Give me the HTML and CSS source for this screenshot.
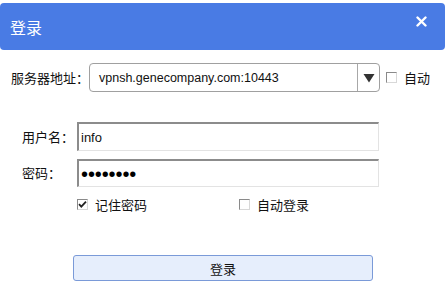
FILE: index.html
```html
<!DOCTYPE html>
<html>
<head>
<meta charset="utf-8">
<link rel="stylesheet" href="styles.css">
</head>
<body>
<div class="window">
  <div class="topstrip"></div>
  <div class="header">
    <span class="title">登录</span>
    <span class="close">
      <svg width="11" height="11" viewBox="0 0 11 11"><path d="M1.5 1.5 L9.5 9.5 M9.5 1.5 L1.5 9.5" stroke="#fff" stroke-width="2.4" stroke-linecap="round"/></svg>
    </span>
  </div>
  <div class="row row-server">
    <span class="label label-server">服务器地址：</span>
    <div class="select">
      <span class="select-text">vpnsh.genecompany.com:10443</span>
      <span class="select-arrow">
        <svg width="12" height="10" viewBox="0 0 12 10"><path d="M0.5 1 L11.5 1 L6 9.5 Z" fill="#333"/></svg>
      </span>
    </div>
    <span class="cb"></span>
    <span class="cb-label">自动</span>
  </div>
  <div class="row row-user">
    <span class="label label-field">用户名：</span>
    <div class="input"><span class="input-text">info</span></div>
  </div>
  <div class="row row-pass">
    <span class="label label-field">密码：</span>
    <div class="input"><span class="input-dots">••••••••</span></div>
  </div>
  <div class="row row-checks">
    <div class="check-item check-first">
      <span class="cb cb-checked">
        <svg width="11" height="11" viewBox="0 0 11 11"><path d="M2 5.2 L4.3 7.6 L9 2.6" fill="none" stroke="#222" stroke-width="1.8"/></svg>
      </span>
      <span class="cb-label">记住密码</span>
    </div>
    <div class="check-item check-second">
      <span class="cb"></span>
      <span class="cb-label">自动登录</span>
    </div>
  </div>
  <div class="row row-btn">
    <button class="btn">登录</button>
  </div>
</div>
</body>
</html>
```
FILE: styles.css
```css
html, body {
  margin: 0;
  padding: 0;
  background: #ffffff;
}
body {
  font-family: "Noto Sans CJK SC", "Liberation Sans", sans-serif;
  color: #111;
}
.window {
  width: 445px;
  height: 291px;
  display: flex;
  flex-direction: column;
  overflow: hidden;
}
.topstrip {
  height: 3px;
  flex: none;
}
.header {
  height: 47px;
  flex: none;
  background: #497be4;
  border-radius: 4px;
  display: flex;
  align-items: center;
  justify-content: space-between;
  padding: 0 18px 0 10px;
  box-sizing: border-box;
}
.title {
  color: #fff;
  font-size: 16px;
  line-height: 20px;
}
.close {
  display: flex;
  align-items: center;
  margin-top: -11px;
}
.row {
  display: flex;
  align-items: center;
  flex: none;
}
.label {
  font-size: 13px;
  color: #111;
  line-height: 16px;
}
.row-server {
  margin-top: 13px;
  height: 29px;
  padding-left: 11px;
}
.label-server {
  width: 78px;
}
.select {
  width: 291px;
  height: 29px;
  box-sizing: border-box;
  border: 1px solid #a0a0a0;
  border-radius: 4px;
  display: flex;
  align-items: center;
}
.select-text {
  flex: 1;
  padding-left: 9px;
  font-family: "Liberation Sans", Arial, sans-serif;
  font-size: 12.5px;
  color: #111;
}
.select-arrow {
  width: 21px;
  height: 27px;
  border-left: 1px solid #a8a8a8;
  display: flex;
  align-items: center;
  justify-content: center;
}
.cb {
  width: 11px;
  height: 11px;
  box-sizing: border-box;
  border: 1px solid #8a8a8a;
  border-right-color: #d8d8d8;
  border-bottom-color: #d8d8d8;
  background: #fff;
  flex: none;
  display: flex;
  align-items: center;
  justify-content: center;
}
.cb svg {
  margin: -1px;
}
.row-server .cb {
  margin-left: 6px;
}
.cb-label {
  font-size: 13px;
  margin-left: 7px;
  line-height: 16px;
}
.row-user {
  margin-top: 30px;
  height: 29px;
  padding-left: 22px;
}
.row-pass {
  margin-top: 8px;
  height: 28px;
  padding-left: 22px;
}
.label-field {
  width: 55px;
}
.input {
  width: 302px;
  height: 100%;
  box-sizing: border-box;
  border-top: 2px solid #8c8c8c;
  border-left: 2px solid #8c8c8c;
  border-right: 1px solid #e3e3e3;
  border-bottom: 1px solid #e3e3e3;
  display: flex;
  align-items: center;
  background: #fff;
}
.input-text {
  padding-left: 2px;
  font-family: "Liberation Sans", Arial, sans-serif;
  font-size: 13px;
}
.input-dots {
  padding-left: 2px;
  font-family: "Liberation Sans", Arial, sans-serif;
  font-size: 20px;
  line-height: 20px;
  letter-spacing: -0.1px;
  color: #000;
}
.row-checks {
  margin-top: 12px;
  height: 11px;
  padding-left: 77px;
}
.check-item {
  display: flex;
  align-items: center;
}
.check-first {
  width: 162px;
}
.row-btn {
  margin-top: 45px;
  padding-left: 73px;
}
.btn {
  width: 300px;
  height: 26px;
  box-sizing: border-box;
  background: #e6eefc;
  border: 1px solid #7a9ad8;
  border-radius: 3px;
  font-family: "Noto Sans CJK SC", sans-serif;
  font-size: 13px;
  color: #111;
  padding: 0;
}
```
